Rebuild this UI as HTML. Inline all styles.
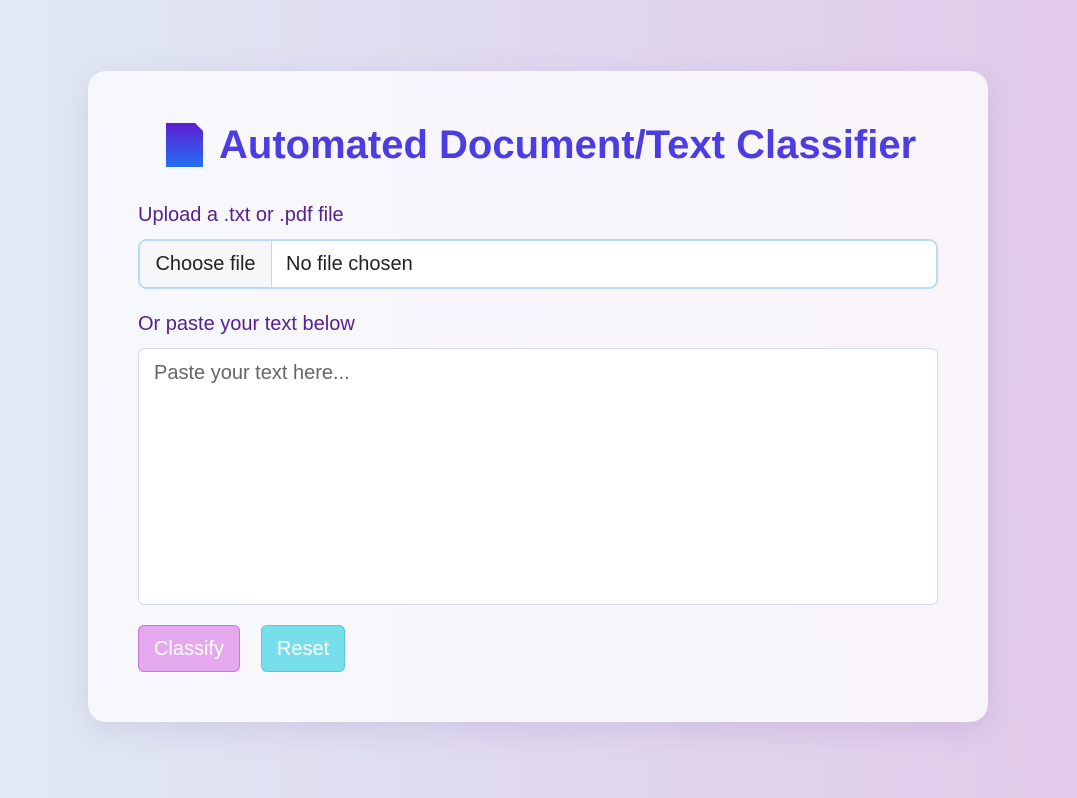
<!DOCTYPE html>
<html><head><style>
html,body{margin:0;padding:0}
body{width:1077px;height:798px;background:linear-gradient(90deg,#e0eaf4,#e0d8ef 50%,#e2caea);font-family:"Liberation Sans",sans-serif;position:relative;overflow:hidden}
.card{position:absolute;left:88px;top:71px;width:900px;height:651px;border-radius:18px;background:linear-gradient(90deg,#f7f8fd,#f8f4fa);box-shadow:0 8px 30px rgba(100,80,150,0.15)}
h1{position:absolute;left:219px;top:122px;margin:0;font-size:40px;font-weight:bold;color:#4c3de2;line-height:46px;white-space:nowrap}
.ic{position:absolute;left:166px;top:123px;width:38px;height:45px}
.lbl{position:absolute;left:138px;font-size:20px;color:#57208f}
.file{position:absolute;left:138px;top:239px;width:796px;height:46px;border:2px solid #b9daf8;border-radius:9px;background:#fff;overflow:hidden;font-size:20px;color:#222}
.file .b{position:absolute;left:0;top:0;width:131px;height:46px;background:#f6f7f9;border-right:1px solid #b9daf8;line-height:46px;text-align:center}
.file .t{position:absolute;left:146px;line-height:46px}
.ta{position:absolute;left:138px;top:348px;width:798px;height:255px;border:1px solid #d9dbe3;border-radius:7px;background:#fff}
.ta span{position:absolute;left:15px;top:13px;font-size:20px;color:#666}
.btn{position:absolute;top:625px;height:45px;border-radius:6px;color:#fff;font-size:20px;line-height:46px;text-align:center}
</style></head><body>
<div class="card"></div>
<svg class="ic" viewBox="0 0 38 45"><defs><linearGradient id="g" x1="0" y1="0" x2="0" y2="1"><stop offset="0" stop-color="#5e1dd0"/><stop offset="1" stop-color="#2470f5"/></linearGradient></defs><path d="M0 0H29L37 8V44H0Z" fill="url(#g)"/></svg>
<h1>Automated Document/Text Classifier</h1>
<div class="lbl" style="top:204px">Upload a .txt or .pdf file</div>
<div class="file"><div class="b">Choose file</div><div class="t">No file chosen</div></div>
<div class="lbl" style="top:313px">Or paste your text below</div>
<div class="ta"><span>Paste your text here...</span></div>
<div class="btn" style="left:138px;width:100px;background:#e4a8ee;border:1px solid #c67ad2">Classify</div>
<div class="btn" style="left:261px;width:82px;background:#76dfeb;border:1px solid #5cc6d8">Reset</div>
</body></html>
